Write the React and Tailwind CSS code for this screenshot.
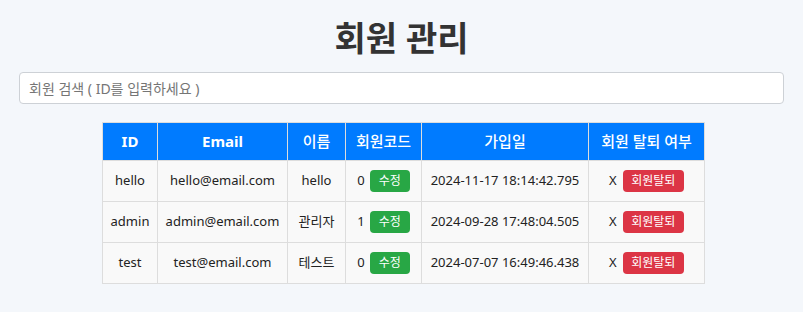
const members = [
  { id: "hello", email: "hello@email.com", name: "hello", code: 0, joined: "2024-11-17 18:14:42.795" },
  { id: "admin", email: "admin@email.com", name: "관리자", code: 1, joined: "2024-09-28 17:48:04.505" },
  { id: "test", email: "test@email.com", name: "테스트", code: 0, joined: "2024-07-07 16:49:46.438" },
];

export default function App() {
  return (
    <div
      className="min-h-[312px] w-full bg-[#f4f7fb] pt-[17px] text-[#222]"
      style={{ fontFamily: "'Noto Sans', 'Noto Sans CJK KR', sans-serif" }}
    >
      <h1 className="text-center text-[34px] font-bold leading-[42px] text-[#333]">회원 관리</h1>

      <div className="mt-[13px] px-[19px]">
        <input
          type="text"
          placeholder="회원 검색 ( ID를 입력하세요 )"
          className="h-[32px] w-full rounded-[4px] border border-[#cdd1d6] bg-white px-[9px] text-[14px] text-[#333] placeholder:text-[#757575] outline-none"
        />
      </div>

      <table className="ml-[102px] mt-[18px] table-fixed border-collapse text-[13px]">
        <colgroup>
          <col className="w-[55px]" />
          <col className="w-[130px]" />
          <col className="w-[58px]" />
          <col className="w-[76px]" />
          <col className="w-[167px]" />
          <col className="w-[116px]" />
        </colgroup>
        <thead>
          <tr className="h-[38px] bg-[#007bff] text-[15px] font-bold text-white">
            <th className="border border-[#ddd]">ID</th>
            <th className="border border-[#ddd]">Email</th>
            <th className="border border-[#ddd] font-medium">이름</th>
            <th className="border border-[#ddd] font-medium">회원코드</th>
            <th className="border border-[#ddd] font-medium">가입일</th>
            <th className="border border-[#ddd] font-medium">회원 탈퇴 여부</th>
          </tr>
        </thead>
        <tbody>
          {members.map((m) => (
            <tr key={m.id} className="h-[41px] bg-[#f9f9f9] text-center">
              <td className="border border-[#ddd]">{m.id}</td>
              <td className="border border-[#ddd]">{m.email}</td>
              <td className="border border-[#ddd]">{m.name}</td>
              <td className="border border-[#ddd]">
                <div className="flex items-center justify-center gap-[5px]">
                  <span>{m.code}</span>
                  <button className="h-[22px] rounded-[4px] bg-[#28a745] px-[9px] text-[12px] leading-[22px] text-white">
                    수정
                  </button>
                </div>
              </td>
              <td className="border border-[#ddd]">{m.joined}</td>
              <td className="border border-[#ddd]">
                <div className="flex items-center justify-center gap-[6px]">
                  <span>X</span>
                  <button className="h-[22px] rounded-[4px] bg-[#dc3545] px-[8.5px] text-[12px] leading-[22px] text-white">
                    회원탈퇴
                  </button>
                </div>
              </td>
            </tr>
          ))}
        </tbody>
      </table>
    </div>
  );
}
